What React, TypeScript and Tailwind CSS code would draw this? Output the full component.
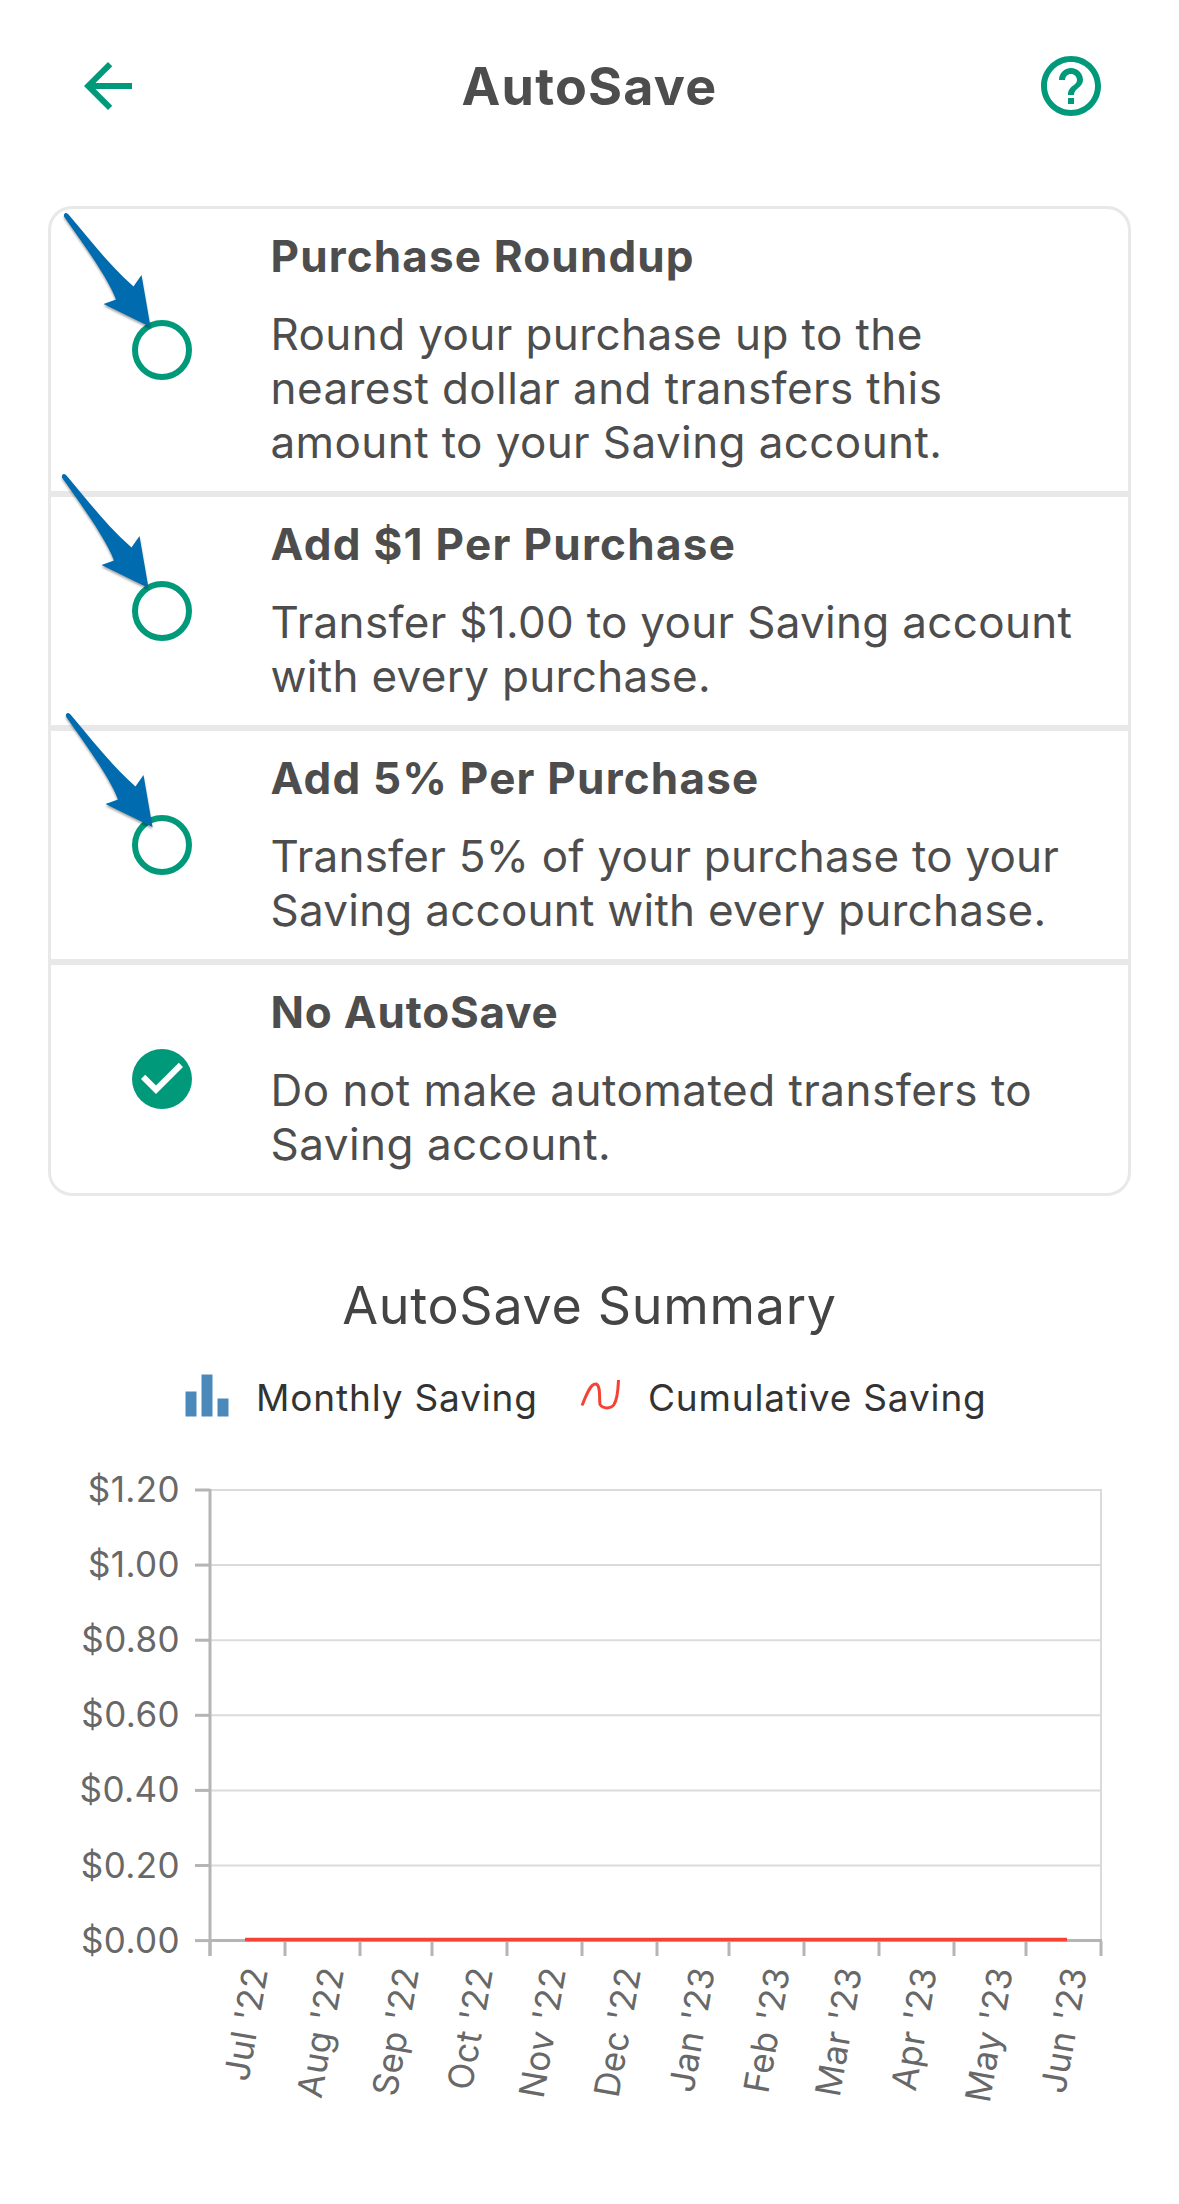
import React from 'react';

interface Option {
    title: string;
    titleTracking: string;
    lines: string[];
    tracking: string;
    selected: boolean;
    pointer: string | null; // offset of the pointer arrow inside the row
}

const options: Option[] = [
    {
        title: 'Purchase Roundup',
        titleTracking: 'tracking-[1.15px]',
        lines: ['Round your purchase up to the', 'nearest dollar and transfers this', 'amount to your Saving account.'],
        tracking: 'tracking-[0.4px]',
        selected: false,
        pointer: 'left-[11px] top-[1px]',
    },
    {
        title: 'Add $1 Per Purchase',
        titleTracking: 'tracking-[1.3px]',
        lines: ['Transfer $1.00 to your Saving account', 'with every purchase.'],
        tracking: 'tracking-[0.31px]',
        selected: false,
        pointer: 'left-[9px] -top-[26px]',
    },
    {
        title: 'Add 5% Per Purchase',
        titleTracking: 'tracking-[1.2px]',
        lines: ['Transfer 5% of your purchase to your', 'Saving account with every purchase.'],
        tracking: 'tracking-[0.24px]',
        selected: false,
        pointer: 'left-[13px] -top-[21px]',
    },
    {
        title: 'No AutoSave',
        titleTracking: 'tracking-[0.8px]',
        lines: ['Do not make automated transfers to', 'Saving account.'],
        tracking: 'tracking-[0.48px]',
        selected: true,
        pointer: null,
    },
];

const amounts = ['$1.20', '$1.00', '$0.80', '$0.60', '$0.40', '$0.20', '$0.00'];

const months = [
    { label: "Jul '22", x: 268 },
    { label: "Aug '22", x: 344 },
    { label: "Sep '22", x: 419 },
    { label: "Oct '22", x: 493 },
    { label: "Nov '22", x: 566 },
    { label: "Dec '22", x: 641 },
    { label: "Jan '23", x: 715 },
    { label: "Feb '23", x: 790 },
    { label: "Mar '23", x: 862 },
    { label: "Apr '23", x: 937 },
    { label: "May '23", x: 1013 },
    { label: "Jun '23", x: 1087 },
];

const ticks = [210, 285, 360, 432, 507, 582, 657, 729, 804, 879, 954, 1026, 1101];

const Pointer: React.FC<{ className: string }> = ({ className }) => (
    <svg className={`absolute z-10 drop-shadow-[0_2px_1px_rgba(0,0,0,0.35)] ${className}`} width="92" height="124" viewBox="0 0 92 124">
        <path
            d="M2 4.500C3 2.500 5 2.500 6.500 4.500C29 31 48 56 71.500 76.500L79.500 65L88.500 117L41.500 94L54 89.500C46 68 24 38 2 6.500Z"
            fill="#006baf"
        />
    </svg>
);

const OptionRow: React.FC<{ option: Option }> = ({ option }) => (
    <div className="relative flex items-center">
        {option.pointer && <Pointer className={option.pointer} />}
        <div className="flex w-[219.5px] shrink-0 pl-[81px]">
            {option.selected ? (
                <svg className="-m-[6px]" width="72" height="72" viewBox="0 0 24 24" fill="#00997a">
                    <circle cx="12" cy="12" r="10" />
                    <path d="M10 17l-5-5 1.41-1.41L10 14.17l7.59-7.59L19 8z" fill="#fff" />
                </svg>
            ) : (
                <div className="size-[60px] rounded-full border-[6px] border-[#00997a]" />
            )}
        </div>
        <div className="pt-[20px] pb-[22px]">
            <h2 className={`mb-6 text-[44px] leading-[54px] font-bold ${option.titleTracking}`}>{option.title}</h2>
            <p className={`text-[44px] leading-[54px] ${option.tracking}`}>
                {option.lines.map((line) => (
                    <span key={line} className="block whitespace-nowrap">{line}</span>
                ))}
            </p>
        </div>
    </div>
);

const Chart: React.FC = () => (
    <svg className="block" width="1179" height="690" viewBox="0 1460 1179 690">
        {/* Grid and amounts */}
        {amounts.map((amount, i) => (
            <g key={amount}>
                <path d={`M211 ${1490 + i * 75.1}H1101`} stroke="#dbdbdb" strokeWidth="2" />
                <path d={`M195 ${1490 + i * 75.1}H210`} stroke="#b5b5b5" strokeWidth="3" />
                <text x="180" y={1502 + i * 75.1} textAnchor="end" fontSize="35" letterSpacing="0.4" fill="#686868">{amount}</text>
            </g>
        ))}
        <path d="M1101 1489V1940" stroke="#dbdbdb" strokeWidth="2" />
        {/* Axes */}
        <path d="M210 1489V1956M210 1940.500H1102" stroke="#b5b5b5" strokeWidth="3" />
        {ticks.map((x) => (
            <path key={x} d={`M${x} 1941V1956`} stroke="#b5b5b5" strokeWidth="3" />
        ))}
        <path d="M245 1939.500H1067" stroke="#f44336" strokeWidth="3.500" />
        {/* Months */}
        {months.map(({ label, x }) => (
            <text
                key={label}
                transform={`translate(${x} 1970) rotate(-80)`}
                textAnchor="end"
                fontSize="35"
                letterSpacing="0.3"
                fill="#686868"
            >
                {label}
            </text>
        ))}
    </svg>
);

const App: React.FC = () => {
    return (
        <div className="h-[2204px] w-[1179px] overflow-hidden bg-white font-[Inter,sans-serif] text-[#4d4d4d]">
            {/* Header */}
            <header className="flex h-[206px] items-start justify-between px-[72px] pt-[50px]">
                <svg width="72" height="72" viewBox="0 0 24 24" fill="#00997a">
                    <path d="M20 11H7.830l5.590-5.590L12 4l-8 8 8 8 1.410-1.410L7.830 13H20z" />
                </svg>
                <h1 className="text-[52px] leading-[74px] font-bold tracking-[1.2px]">AutoSave</h1>
                <svg width="72" height="72" viewBox="0 0 24 24" fill="#00997a">
                    <path d="M11 18h2v-2h-2v2zm1-16C6.480 2 2 6.480 2 12s4.480 10 10 10 10-4.480 10-10S17.520 2 12 2zm0 18c-4.410 0-8-3.590-8-8s3.590-8 8-8 8 3.590 8 8-3.590 8-8 8zm0-14c-2.210 0-4 1.790-4 4h2c0-1.100.9-2 2-2s2 .9 2 2c0 2-3 1.750-3 5h2c0-2.250 3-2.500 3-5 0-2.210-1.790-4-4-4z" />
                </svg>
            </header>

            {/* Options */}
            <div className="mx-12 divide-y-[6px] divide-[#e8e8e8] rounded-3xl border-[3px] border-[#e8e8e8]">
                {options.map((option) => (
                    <OptionRow key={option.title} option={option} />
                ))}
            </div>

            {/* Summary */}
            <h2 className="mt-[73px] text-center text-[52px] leading-[74px] tracking-[0.7px] text-[#444]">AutoSave Summary</h2>
            <div className="flex h-[117px] items-start pt-[17px] text-[37px] leading-[76px] tracking-[0.84px] text-[#333]">
                <svg className="ml-[170px] shrink-0" width="86" height="70" viewBox="170 1360 86 70" fill="#4c89bb">
                    <path d="M185.500 1391.500h11v25h-11zM201.500 1374.500h11v42h-11zM217.500 1398.500h11v18h-11z" />
                </svg>
                <span className="w-[314px] whitespace-nowrap">Monthly Saving</span>
                <svg className="shrink-0" width="78" height="70" viewBox="570 1360 78 70" fill="none" stroke="#f44336" strokeWidth="3">
                    <path d="M582 1405.500C586 1396 590 1384 595.500 1384C601 1384 599 1399 600 1404.500C603 1409 611 1409 614 1404.500C618 1398 618 1389 618.500 1380" />
                </svg>
                <span className="whitespace-nowrap">Cumulative Saving</span>
            </div>
            <Chart />
        </div>
    );
};

export default App;
